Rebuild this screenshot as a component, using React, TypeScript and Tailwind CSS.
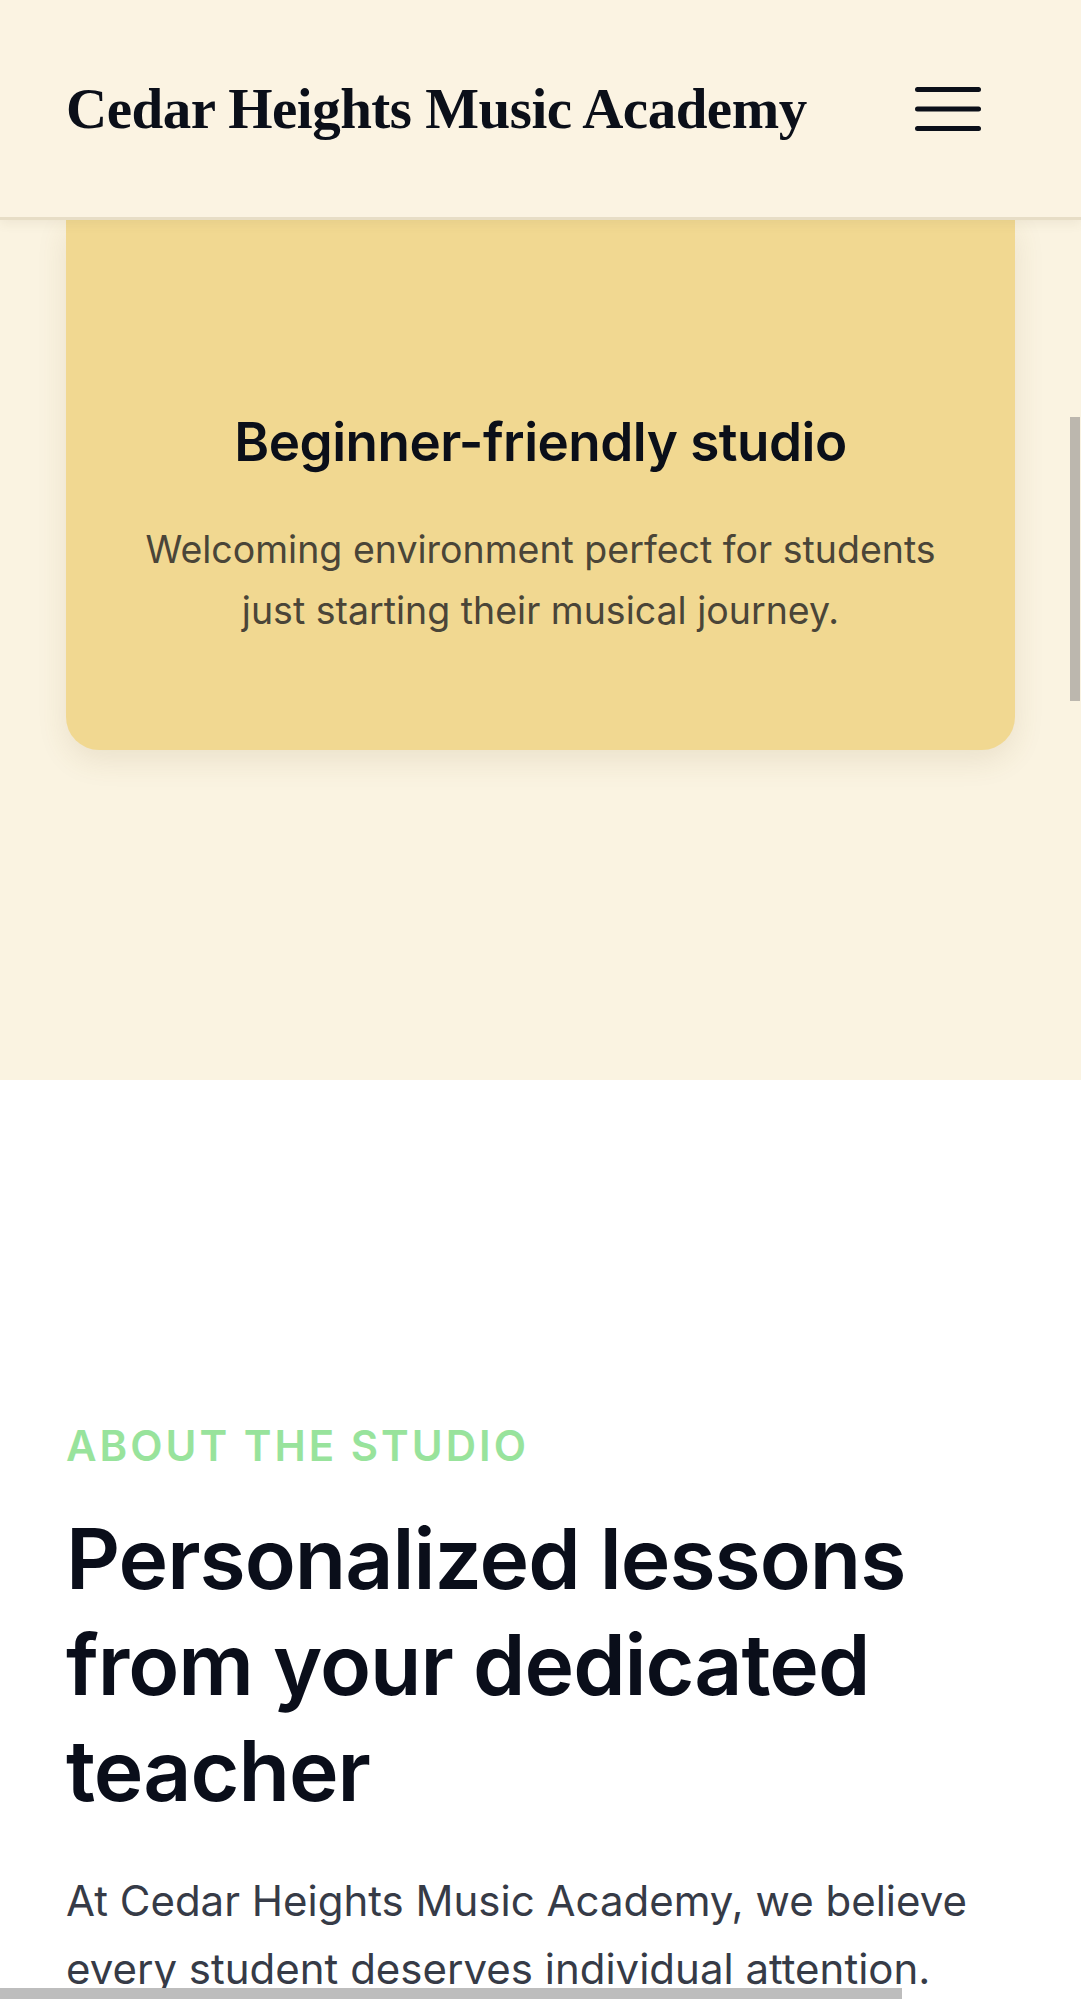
import React from "react";

function MenuIcon() {
  return (
    <svg width="66" height="44" viewBox="0 0 66 44" fill="none" className="block">
      <line x1="2.5" y1="2.5" x2="63.5" y2="2.5" stroke="#0b0f19" strokeWidth="5" strokeLinecap="round" />
      <line x1="2.5" y1="22" x2="63.5" y2="22" stroke="#0b0f19" strokeWidth="5" strokeLinecap="round" />
      <line x1="2.5" y1="41.5" x2="63.5" y2="41.5" stroke="#0b0f19" strokeWidth="5" strokeLinecap="round" />
    </svg>
  );
}

function App() {
  return (
    <div className="relative w-[1081px] h-[1999px] overflow-hidden bg-white font-['Inter',sans-serif]">
      <header className="relative z-10 h-[220px] flex items-center justify-between pl-[66px] pr-[100px] bg-[#fbf3e2] border-b-[3px] border-[#e7ddc6] shadow-[0_4px_10px_rgba(120,100,60,0.08)]">
        <h1 className="font-['Liberation_Serif',serif] font-bold text-[57px] leading-none text-[#0b0f19] tracking-[-0.5px]">
          Cedar Heights Music Academy
        </h1>
        <MenuIcon />
      </header>

      <section className="bg-[#faf3e1] px-[66px] pb-[330px]">
        <div className="rounded-b-[33px] bg-[#f1d891] shadow-[0_10px_30px_rgba(120,95,40,0.12)] text-center pt-[184px] pb-[109px]">
          <h3 className="text-[53px] leading-[77px] font-semibold text-[#0b0f19] tracking-[-0.5px]">
            Beginner-friendly studio
          </h3>
          <p className="mt-[38px] text-[37.5px] leading-[61px] text-[#4a4538] px-[60px]">
            Welcoming environment perfect for students
            <br />
            just starting their musical journey.
          </p>
        </div>
      </section>

      <section className="px-[66px] pt-[336px]">
        <p className="text-[42px] leading-[60px] font-semibold uppercase tracking-[3px] text-[#98e39c]">
          About the studio
        </p>
        <h2 className="mt-[30px] text-[84px] leading-[106px] font-semibold text-[#0a0e1a] tracking-[-1px]">
          Personalized lessons
          <br />
          from your dedicated
          <br />
          teacher
        </h2>
        <p className="mt-[43px] text-[42px] leading-[68px] text-[#363b47]">
          At Cedar Heights Music Academy, we believe every student deserves individual attention.
        </p>
      </section>

      <div className="absolute right-[1px] top-[417px] w-[10px] h-[284px] bg-[#bcb7ae]" />
      <div className="absolute left-0 bottom-0 w-[902px] h-[11px] bg-[#bdbdbd]" />
    </div>
  );
}

export default App;
